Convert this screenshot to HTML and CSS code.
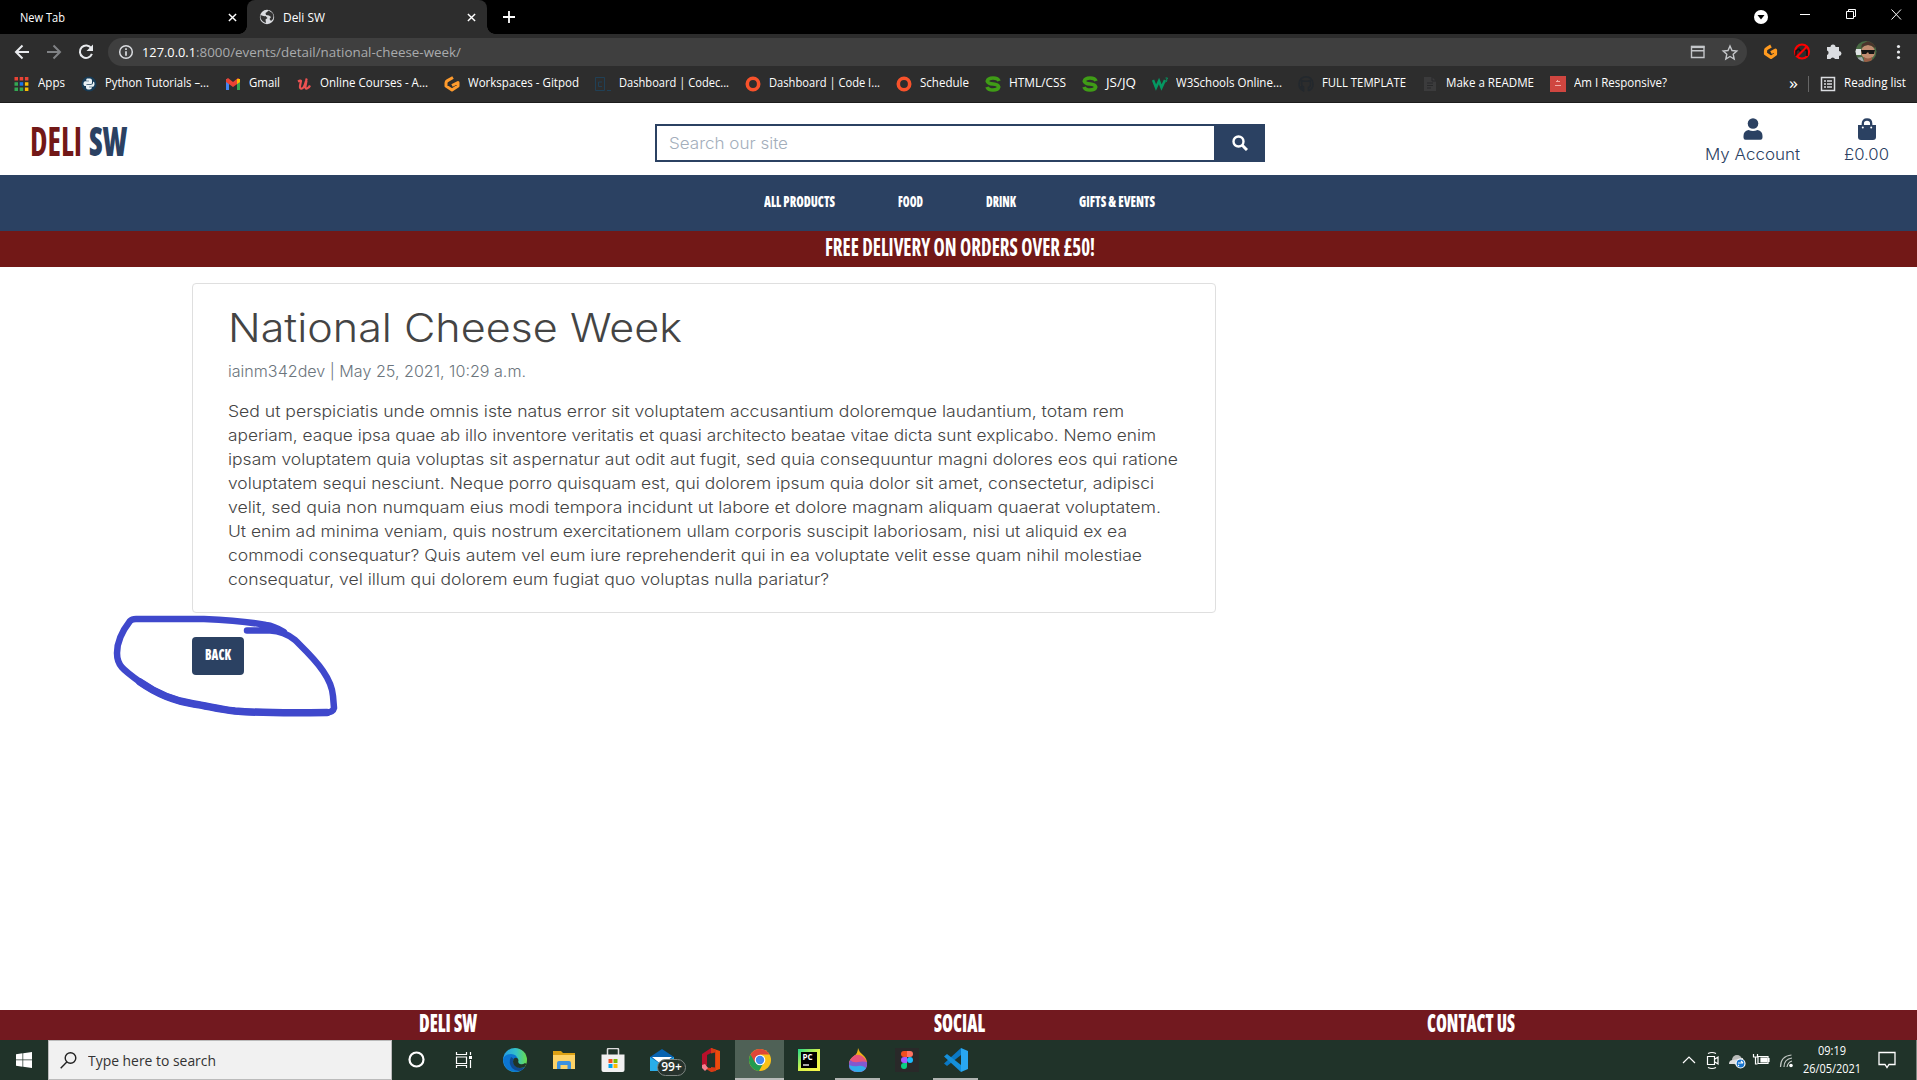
FILE: index.html
```html
<!DOCTYPE html>
<html lang="en">
<head>
<meta charset="utf-8">
<title>Deli SW</title>
<link rel="stylesheet" href="styles.css">
</head>
<body>
<div class="tabs">
  <div class="tab"><span data-w="45">New Tab</span><svg class="x" viewBox="0 0 10 10"><path d="M1 1l8 8M9 1l-8 8"/></svg></div>
  <div class="tab active"><svg class="globe" viewBox="0 0 16 16"><circle cx="8" cy="8" r="7.200" fill="#dadce0"/><path d="M1.500 6q3 1.500 5 1l2 2-2 1.500.5 3.500Q3 13 1.500 9zM9.500 1.500L8 3 6.500 4l.5 2 3 .5 2 1.500-1.500 2 1.500 2 2-2 .5-3-1-3z" fill="#333"/></svg><span data-w="42">Deli SW</span><svg class="x" viewBox="0 0 10 10"><path d="M1 1l8 8M9 1l-8 8"/></svg></div>
  <svg class="plus" viewBox="0 0 12 12"><path d="M6 0v12M0 6h12"/></svg>
  <svg class="wincontrols" viewBox="0 0 167 34"><circle cx="11" cy="17" r="7" fill="#fff"/><path d="M7.500 15h7L11 19.500z" fill="#000"/><g fill="none" stroke="#fff"><path d="M50 14.500h10M96.500 11.500h7v7h-7zM98.500 11V9.500h7v7H104M141.500 9.500l9.500 10M151 9.500l-9.500 10"/></g></svg>
</div>
<div class="toolbar">
  <svg class="navicons" viewBox="0 0 108 38" fill="none" stroke="#e8eaed" stroke-width="2"><path d="M29 19H16M22.500 12.500L16 19l6.500 6.500"/><path d="M47 19h13M53.500 12.500L60 19l-6.500 6.500" stroke="#808285"/><path d="M91.300 15.300a6.200 6.200 0 1 0 .6 5.600"/><path d="M93 11.500V18h-6.500z" fill="#e8eaed" stroke="none"/></svg>
  <div class="omnibox">
    <svg class="info" viewBox="0 0 16 16"><circle cx="8" cy="8" r="6.300" fill="none" stroke="#dadce0" stroke-width="1.500"/><path d="M8 4.300v1.700M8 7.200v4.500" stroke="#dadce0" stroke-width="1.700"/></svg>
    <span class="host" data-w="54">127.0.0.1</span><span class="path" data-w="265">:8000/events/detail/national-cheese-week/</span>
    <svg class="omniicons" viewBox="0 0 50 28" fill="none" stroke="#c4c6c9" stroke-width="1.400"><path d="M1.500 8.500h12.500v11H1.500zM1.500 12.800h12.500"/><path d="M1 9h13.500" stroke-width="2.200"/><path d="M40 8l2 4.500 4.800.5-3.600 3.200 1 4.800L40 18.500 35.800 21l1-4.800L33.200 13l4.800-.5z"/></svg>
  </div>
  <svg class="extensions" viewBox="0 0 170 38"><path d="M24 13l-4 2.300q-1.500.8-1.500 2.400v3l5.500 3.700 4.500-3.200v-4l-4.500 2.400" fill="none" stroke="#ff9a1f" stroke-width="3.200" stroke-linejoin="round"/><circle cx="55" cy="18.500" r="7" fill="none" stroke="#f00" stroke-width="2.200"/><path d="M49 23V18l3-2 2 3 3-3 3 2v5" fill="none" stroke="#111" stroke-width="1.500"/><path d="M50 23.500l10-10" stroke="#f00" stroke-width="2.200"/><path d="M80 14h3.500a2.500 2.500 0 0 1 5 0H92v4a2.500 2.500 0 0 1 0 5v3h-4a2.400 2.400 0 0 0-4.500 0H80v-4a2.400 2.400 0 0 0 0-4.500z" fill="#dadce0"/>
    <clipPath id="av"><circle cx="119" cy="18.500" r="10.500"/></clipPath><g clip-path="url(#av)"><path d="M108 8h22v22h-22z" fill="#486a43"/><path d="M108 16h6v6h-6z" fill="#dfe2e4"/><circle cx="121" cy="19" r="7" fill="#c18c70"/><path d="M114 15q7-6 14 0v-4l-7-3-6 3z" fill="#4a342b"/><path d="M114 17h14l-1 4h-5l-1-2-2 2h-4z" fill="#141414"/><path d="M117 24q4 3 8 0v7h-8z" fill="#985d46"/><path d="M108 25l7-1 3 7h-10z" fill="#a2a6ad"/></g><g fill="#e8eaed"><circle cx="151.500" cy="13.500" r="1.600"/><circle cx="151.500" cy="19" r="1.600"/><circle cx="151.500" cy="24.500" r="1.600"/></g></svg>
</div>
<div class="bookmarks">
  <div class="bm"><svg viewBox="0 0 16 16"><g fill="#ea4335"><path d="M.500 1h3.500v3.500H.500zM5.700 1h3.500v3.500H5.700zM10.900 1h3.500v3.500h-3.500z"/></g><path d="M.500 6.200h3.500v3.500H.500zM.500 11.400h3.500v3.500H.500zM5.700 11.400h3.500v3.500H5.700z" fill="#34a853"/><path d="M5.700 6.200h3.500v3.500H5.700z" fill="#1a73e8"/><path d="M10.900 6.200h3.500v3.500h-3.500zM10.900 11.400h3.500v3.500h-3.500z" fill="#fbbc04"/></svg><span data-w="27">Apps</span></div>
  <div class="bm"><svg viewBox="0 0 16 16"><circle cx="8" cy="8" r="7.500" fill="#173b56"/><path d="M6 2.500h3q2 0 2 2V7q0 1-1 1H6.500q-1.500 0-1.500 2H3.500Q2 9 2.500 7T4.500 5.300H8V4.700H5.200Q5 3 6 2.500zM12 5.500q2 .5 1.500 3T11.500 10.700H8v.6h3q0 2-2 2.200H7q-2-.2-2-2V10q0-1.300 1.300-1.300H10Q12 8.500 12 7z" fill="#e9f1f5"/></svg><span data-w="104">Python Tutorials –...</span></div>
  <div class="bm"><svg viewBox="0 0 16 16"><path d="M1 3h3v11H1z" fill="#4285f4"/><path d="M12 3h3v11h-3z" fill="#34a853"/><path d="M1 3.500L3 2l5 4 5-4 2 1.500V6l-7 5-7-5z" fill="#ea4335"/><path d="M12 3l3 0v3l-3 2z" fill="#fbbc04"/></svg><span data-w="31">Gmail</span></div>
  <div class="bm"><svg viewBox="0 0 16 16"><path d="M2 5.500q3-1.500 3-.5l-1 5q-.5 3 2 2.500Q8 12 10 5q.5-2 .8-2.500M10.500 4.500L9.500 10q-.5 3 1.500 2.500 2-.5 3-3" fill="none" stroke="#ec5252" stroke-width="2.200"/></svg><span data-w="108">Online Courses - A...</span></div>
  <div class="bm"><svg viewBox="0 0 16 16"><path d="M9 1.500L3.500 4.600Q2 5.500 2 7v3l6 4 6-4V6.500L8 9.500" fill="none" stroke="#ff9b2d" stroke-width="3" stroke-linejoin="round"/></svg><span data-w="111">Workspaces - Gitpod</span></div>
  <div class="bm"><svg viewBox="0 0 16 16" fill="none" stroke="#204056"><path d="M.500 1.500h9v13h-9zM7 6H3.500v4.500H7M12 14.500h4"/></svg><span data-w="110">Dashboard | Codec...</span></div>
  <div class="bm"><svg viewBox="0 0 16 16"><circle cx="8" cy="8" r="5.700" fill="none" stroke="#f7522b" stroke-width="3.600"/></svg><span data-w="111">Dashboard | Code I...</span></div>
  <div class="bm"><svg viewBox="0 0 16 16"><circle cx="8" cy="8" r="5.700" fill="none" stroke="#f7522b" stroke-width="3.600"/></svg><span data-w="49">Schedule</span></div>
  <div class="bm"><svg viewBox="0 0 16 16"><path d="M14 5Q13 2 8 2T2.300 5.200Q3 7.600 8 8t5.700 3Q13 14 8 14T2 11" fill="none" stroke="#3f9c16" stroke-width="3.600"/></svg><span data-w="57">HTML/CSS</span></div>
  <div class="bm"><svg viewBox="0 0 16 16"><path d="M14 5Q13 2 8 2T2.300 5.200Q3 7.600 8 8t5.700 3Q13 14 8 14T2 11" fill="none" stroke="#3f9c16" stroke-width="3.600"/></svg><span data-w="30">JS/JQ</span></div>
  <div class="bm"><svg viewBox="0 0 16 16" fill="none" stroke="#059862"><path d="M1 4l3 7.500L7 5l2.500 6.500L13 4" stroke-width="2.500"/><path d="M13.500 2h2l-1 2q1.500 1-1 2"/></svg><span data-w="106">W3Schools Online...</span></div>
  <div class="bm"><svg viewBox="0 0 16 16"><path d="M8 .8a7.300 7.300 0 0 0-2.500 14v-3q-2 .5-3-1.500M10.500 14.800a7.300 7.300 0 0 0-2.500-14M10.500 15v-3.500q2.500-1 2-4.500l-.5-2.500-2 .8H6l-2-.8L3.500 7q0 3.500 2.500 4.500" fill="none" stroke="#23282d" stroke-width="1.600"/></svg><span data-w="84">FULL TEMPLATE</span></div>
  <div class="bm"><svg viewBox="0 0 16 16"><path d="M2 1h8l4 4v10H2z" fill="#3b3b3c"/><path d="M10 1v4h4M5 7h6M5 9.500h6M5 12h4" stroke="#28292a" fill="none"/></svg><span data-w="88">Make a README</span></div>
  <div class="bm"><svg viewBox="0 0 16 16"><path d="M0 0h16v16H0z" fill="#cf4640"/><path d="M5 9.500h6M6 5.500h4M7.500 4v1" stroke="#f0aaa5"/></svg><span data-w="93">Am I Responsive?</span></div>
  <div class="reading"><span class="more" data-w="9">»</span><i></i><svg viewBox="0 0 16 16" fill="none" stroke="#dadce0" stroke-width="1.500"><path d="M1.500 1.500h13v13h-13zM4 5h2M7 5h5M4 8h2M7 8h5M4 11h2M7 11h5"/></svg><span data-w="62">Reading list</span></div>
</div>

<header class="site">
  <a class="logo"><span class="thin" data-w="52">DELI</span><span data-w="38">SW</span></a>
  <div class="search"><div class="field"><span class="mont" data-w="119">Search our site</span></div><div class="go"><svg viewBox="0 0 16 16"><circle cx="6.500" cy="6.500" r="5" fill="none" stroke="#fff" stroke-width="2.400"/><path d="M10 10l5 5" stroke="#fff" stroke-width="3"/></svg></div></div>
  <div class="account">
    <div><svg viewBox="0 0 20 22"><circle cx="10" cy="5.500" r="5.300"/><path d="M5.500 12q4.500 2 9 0 5 1 5 6v1.500q0 2.300-2 2.300h-15q-2 0-2-2.300V18q0-5 5-6z"/></svg><span class="mont" data-w="95">My Account</span></div>
    <div><svg viewBox="0 0 20 22"><path d="M1 7h18v12q0 3-3 3H4q-3 0-3-3z"/><path d="M5.800 9V5.500q0-4 4.200-4t4.200 4V9" fill="none" stroke="#2b4162" stroke-width="2.300"/><circle cx="5.800" cy="9.500" r="1" fill="#fff"/><circle cx="14.200" cy="9.500" r="1" fill="#fff"/></svg><span class="mont" data-w="45">£0.00</span></div>
  </div>
</header>
<nav class="menu"><span data-w="71">ALL PRODUCTS</span><span data-w="25">FOOD</span><span data-w="30">DRINK</span><span data-w="76">GIFTS &amp; EVENTS</span></nav>
<div class="banner"><span data-w="270">FREE DELIVERY ON ORDERS OVER £50!</span></div>
<main>
  <article class="card mont">
    <h1><span data-w="454">National Cheese Week</span></h1>
    <p class="meta"><span data-w="298">iainm342dev | May 25, 2021, 10:29 a.m.</span></p>
    <p><span data-w="896">Sed ut perspiciatis unde omnis iste natus error sit voluptatem accusantium doloremque laudantium, totam rem</span><br>
    <span data-w="928">aperiam, eaque ipsa quae ab illo inventore veritatis et quasi architecto beatae vitae dicta sunt explicabo. Nemo enim</span><br>
    <span data-w="950">ipsam voluptatem quia voluptas sit aspernatur aut odit aut fugit, sed quia consequuntur magni dolores eos qui ratione</span><br>
    <span data-w="926">voluptatem sequi nesciunt. Neque porro quisquam est, qui dolorem ipsum quia dolor sit amet, consectetur, adipisci</span><br>
    <span data-w="933">velit, sed quia non numquam eius modi tempora incidunt ut labore et dolore magnam aliquam quaerat voluptatem.</span><br>
    <span data-w="899">Ut enim ad minima veniam, quis nostrum exercitationem ullam corporis suscipit laboriosam, nisi ut aliquid ex ea</span><br>
    <span data-w="914">commodi consequatur? Quis autem vel eum iure reprehenderit qui in ea voluptate velit esse quam nihil molestiae</span><br>
    <span data-w="601">consequatur, vel illum qui dolorem eum fugiat quo voluptas nulla pariatur?</span></p>
  </article>
  <a class="back"><span data-w="26">BACK</span>
    <svg class="scribble" viewBox="0 0 230 106"><path d="M137 19.500H160Q174 20 185 29C194 38 205 48 213 60Q222 73 223 85L224 97Q223 101 217 101.500C185 102 150 102 125 100C107 98 98 95 84 93C64 90 47 83 30 71C12 58 7 54 7 42C7 29 13 19 20 10Q22 8 26 8H94C118 9 140 11 156 14Q164 15 174 21"/><path d="M30 71C47 83 64 90 84 93C98 95 107 98 125 100C150 102 185 102 217 101.500" stroke-width="7.500"/></svg>
  </a>
</main>
<footer><div><span data-w="58">DELI SW</span></div><div><span data-w="51">SOCIAL</span></div><div><span data-w="88">CONTACT US</span></div></footer>

<div class="taskbar">
  <div class="start"><svg viewBox="0 0 16 16"><path d="M0 2.200L6.500 1.300v6.300H0zM7.200 1.200L16 0v7.600H7.200zM0 8.300h6.500v6.400L0 13.800zM7.200 8.300H16V16l-8.800-1.200z" fill="#fff"/></svg></div>
  <div class="find"><svg viewBox="0 0 17 17" fill="none" stroke="#222" stroke-width="1.400"><circle cx="10.500" cy="6" r="5.300"/><path d="M6.800 10L.700 16.300"/></svg><span data-w="128">Type here to search</span></div>
  <div class="app"><svg viewBox="0 0 24 24"><circle cx="11.500" cy="11.500" r="7" fill="none" stroke="#fff" stroke-width="2.200"/></svg></div>
  <div class="app"><svg viewBox="0 0 24 24" fill="none" stroke="#fff" stroke-width="1.200"><path d="M2.500 4v2.500h10V4M2.500 9h10v6.500h-10zM2.500 20v-2.500h10V20M16.500 4v3M16.500 12v8"/><path d="M15 8h3v3h-3z" fill="#fff" stroke="none"/></svg></div>
  <div class="app"><svg viewBox="0 0 24 24"><defs><linearGradient id="e1" x2="1"><stop stop-color="#249be7"/><stop offset=".55" stop-color="#34c1c8"/><stop offset="1" stop-color="#68de4a"/></linearGradient></defs><circle cx="12" cy="12" r="12" fill="url(#e1)"/><path d="M0 11Q2 6 8 6q6 0 7 6-2-2-5-1-3 2-1 6 3 6 13 2-4 5-10 5Q1 23 0 11z" fill="#0b75d1"/><path d="M8 9q-3 6 1 11 3 3 7 3 4-1 6-4-5 2-9-1-4-3-2-7z" fill="#104a91"/><path d="M11.500 10q3-1 4 2-1 3 1.500 4t5-1l1.500 1-2 3q-7 2.500-10-1.500T11.500 10z" fill="#203329"/></svg></div>
  <div class="app"><svg viewBox="0 0 24 24"><path d="M1 3h8l2 2h12v15H1z" fill="#dca114"/><path d="M1 7h22v14H1z" fill="#fdd367"/><path d="M5 21v-6q0-2 2-2h10q2 0 2 2v6h-3.500v-4H8.500v4z" fill="#3d92df"/></svg></div>
  <div class="app"><svg viewBox="0 0 24 24"><path d="M6.500 7V1.500Q6.500.5 8 .500h8q1.500 0 1.500 1V7" fill="none" stroke="#ddd" stroke-width="1.500"/><path d="M.500 6.500h23V22q0 2-2 2h-19q-2 0-2-2z" fill="#f1f1f1"/><path d="M7.500 11H11.500v4h-4z" fill="#f25022"/><path d="M12.500 11h4v4h-4z" fill="#7fba00"/><path d="M7.500 16h4v4h-4z" fill="#00a4ef"/><path d="M12.500 16h4v4h-4z" fill="#ffb900"/></svg></div>
  <div class="app"><svg viewBox="0 0 24 24"><path d="M0 9l12-8 12 8v14H0z" fill="#0863b0"/><path d="M2 9h20L12 17z" fill="#fff"/><path d="M0 9l12 8 12-8v14H0z" fill="#29aeea"/></svg><b class="badge">99+</b></div>
  <div class="app"><svg viewBox="0 0 24 24"><path d="M3 6l9-6v5l-4 2v10l-4 2-1-2z" fill="#b8102b"/><path d="M12 0l9 3v18l-9 3z" fill="#eb4b0b"/><path d="M12 5v15l-8-1 8 5 5-1V2l-5-2z" fill="#d73a16"/><path d="M12 5.500l4-1v15l-4-.5z" fill="#203329"/><path d="M3 17l3-1 3 4-3 3-3-3z" fill="#f87f91"/></svg></div>
  <div class="app current"><svg viewBox="0 0 24 24"><circle cx="12" cy="12" r="11" fill="#fbc116"/><path d="M12 12L2.500 6.500A11 11 0 0 0 11 23l5-9z" fill="#229b50"/><path d="M2.500 6.500A11 11 0 0 1 21.500 6.500H12l-5 8z" fill="#df4638"/><circle cx="12" cy="12" r="5.300" fill="#fff"/><circle cx="12" cy="12" r="4.200" fill="#4387ee"/></svg></div>
  <div class="app"><svg viewBox="0 0 24 24"><defs><linearGradient id="p" y1="0" x2="1" y2="1"><stop stop-color="#21d789"/><stop offset=".5" stop-color="#d8f34b"/><stop offset="1" stop-color="#fcf84a"/></linearGradient></defs><path d="M1 1h22v22H1z" fill="url(#p)"/><path d="M4 4h16v16H4z"/><text x="5.500" y="12" font-family="Open Sans, sans-serif" font-size="8" font-weight="700" fill="#fff">PC</text><path d="M6 17h6" stroke="#fff" stroke-width="1.300"/></svg></div>
  <div class="app open"><svg viewBox="0 0 24 24"><path d="M12 0q1 4 5 7t4 9q-1 8-9 8T3 16q0-5 5-8 4-3 4-8z" fill="#efb216"/><path d="M9 7q7-1 11 5l1 4q-1 8-9 8T3 16q0-5 6-9z" fill="#e8547b"/><path d="M4 12q3 3 8 2t9 0q1 10-9 10T3 16z" fill="#8259cf"/><path d="M3 17q5 2 9 1t8 2q-2 4-8 4-8 0-9-7z" fill="#32aeea"/></svg></div>
  <div class="app"><svg viewBox="0 0 24 24"><rect width="24" height="24" rx="1" fill="#292929"/><path d="M12 3H9a3 3 0 0 0 0 6h3z" fill="#f24e1e"/><path d="M12 3h3a3 3 0 0 1 0 6h-3z" fill="#ff7262"/><path d="M12 9H9a3 3 0 0 0 0 6h3z" fill="#a259ff"/><circle cx="15" cy="12" r="3" fill="#1abcfe"/><path d="M12 15H9a3 3 0 1 0 3 3z" fill="#0acf83"/></svg></div>
  <div class="app open"><svg viewBox="0 0 24 24"><path d="M17 0l7 3v18l-7 3z" fill="#29a7f1"/><path d="M17 7L3 18 0 15.500 17 0z" fill="#0a78c4"/><path d="M17 17L3 6 0 8.500 17 24z" fill="#1590da"/></svg></div>
  <svg class="tray" viewBox="0 0 120 40" fill="none" stroke="#fff" stroke-width="1.200"><path d="M4 23l6-6 6 6"/><path d="M28.500 16.500h7v8h-7zM36 19l3-2v7l-3-2M29 13.500q4-2 8 0M29 27.500q4 2 8 0"/><circle cx="58" cy="20" r="5" fill="#b9bbb9" stroke="none"/><path d="M50 24q0-4 4-4l10-2v6z" fill="#ddd" stroke="none"/><circle cx="61.500" cy="23.500" r="4.500" fill="#1674ce"/><path d="M59 23h5M62 21l2 2M59 25l1 1"/><path d="M79 16.500h10v7H79zM90 18v4"/><path d="M82 18h6v4h-6z" fill="#fff"/><path d="M74.500 14v3h4v-3M76.500 17v7h2"/><path d="M101.500 27q0-11 11-12M105 27q0-8 8-9M108 27q1-5 5-6" stroke="#c4cac6"/><circle cx="112" cy="25.500" r="1.200" fill="#fff"/></svg>
  <div class="clock"><span data-w="28">09:19</span><span data-w="58">26/05/2021</span></div>
  <svg class="notify" viewBox="0 0 18 18" fill="none" stroke="#fff" stroke-width="1.300"><path d="M1 1.500h16v12h-6L9 16.500l-2-3H1z"/></svg>
</div>
<script src="fit.js"></script>
</body>
</html>
```
FILE: styles.css
```css
* { box-sizing: border-box; }
body { margin: 0; width: 1917px; height: 1080px; overflow: hidden; display: flex; flex-direction: column; background: #fff; font-family: "Open Sans", "Noto Sans", sans-serif; font-size: 12px; color: #fff; }
svg { flex: none; display: block; }
[data-w] { display: inline-block; flex: none; white-space: pre; transform-origin: 0 50%; }
.mont { font-family: Inter, "Open Sans", sans-serif; font-weight: 300; }

.tabs { height: 34px; background: #000; display: flex; align-items: center; }
.tab { height: 34px; width: 247px; padding: 0 10px 0 20px; display: flex; align-items: center; }
.tab .x { width: 9px; height: 9px; margin-left: auto; stroke: #fff; stroke-width: 1.6; }
.tab.active { position: relative; width: 240px; padding: 0 11px 0 12px; background: #2d2d2d; border-radius: 8px 8px 0 0; }
.tab.active::before, .tab.active::after { content: ""; position: absolute; bottom: 0; width: 8px; height: 8px; }
.tab.active::before { left: -8px; background: radial-gradient(circle at 0 0, #000 7.5px, #2d2d2d 8px); }
.tab.active::after { right: -8px; background: radial-gradient(circle at 100% 0, #000 7.5px, #2d2d2d 8px); }
.globe { width: 16px; height: 16px; margin-right: 8px; }
.plus { width: 12px; height: 12px; margin-left: 16px; stroke: #fff; stroke-width: 1.8; }
.wincontrols { width: 167px; height: 34px; margin-left: auto; }

.toolbar { height: 36px; background: #2d2d2d; display: flex; align-items: center; }
.navicons { width: 108px; height: 38px; }
.omnibox { width: 1639px; height: 28px; border-radius: 14px; background: #3f3f3f; display: flex; align-items: center; padding: 0 7px 0 10px; font-size: 13px; }
.info { width: 16px; height: 16px; margin-right: 8px; }
.path { color: #a9abad; }
.omniicons { width: 50px; height: 28px; margin-left: auto; }
.extensions { width: 170px; height: 38px; }

.bookmarks { height: 33px; padding: 0 11px 5px 14px; border-bottom: 1px solid #1c1c1c; background: #2d2d2d; display: flex; align-items: center; gap: 16px; }
.bm { display: flex; align-items: center; gap: 8px; }
.bm span, .reading span { line-height: 16px; padding-bottom: 1px; }
.bookmarks svg { width: 16px; height: 16px; }
.reading { margin-left: auto; display: flex; align-items: center; }
.reading i { width: 1px; height: 16px; background: #666; margin: 0 11px 0 10px; }
.reading svg { margin-right: 8px; }
.reading .more { font-size: 17px; line-height: 14px; }

.site { height: 72px; display: grid; grid-template-columns: 655px 610px 1fr; color: #2b4162; }
.logo { display: flex; gap: 7px; padding: 8px 0 0 30px; font-size: 41px; line-height: 59px; font-weight: 800; font-stretch: 75%; }
.logo .thin { color: #721817; font-weight: 700; }
.search { margin-top: 21px; height: 38px; display: flex; }
.field { width: 559px; border: 2px solid #2b4162; border-right: 0; padding-left: 12px; display: flex; align-items: center; color: #a3aebb; font-size: 15.5px; }
.go { width: 51px; background: #2b4162; display: flex; align-items: center; justify-content: center; }
.go svg { width: 16px; height: 16px; }
.account { display: flex; justify-content: flex-end; gap: 44px; padding: 15px 28px 0 0; font-size: 15.5px; }
.account div { display: flex; flex-direction: column; align-items: center; }
.account div > span { align-self: flex-start; line-height: 29px; }
.account svg { width: 20px; height: 22px; fill: #2b4162; }

.menu { height: 56px; background: #2b4162; display: flex; justify-content: center; gap: 63px; padding: 0 0 4px 2px; align-items: center; font-size: 16px; font-weight: 800; font-stretch: 75%; }
.banner { height: 36px; background: #721817; display: flex; justify-content: center; padding: 0 0 5px 2px; align-items: center; font-size: 24px; line-height: 30px; font-weight: 700; font-stretch: 75%; }

main { flex: 1; padding: 16px 192px 0; display: flex; flex-direction: column; align-items: flex-start; }
.card { width: 1024px; height: 330px; border: 1px solid #dfdfdf; border-radius: 4px; padding: 20px 35px; color: #444; font-size: 15.4px; line-height: 24px; }
.card h1 { margin: 0; font-size: 39px; line-height: 48px; font-weight: 300; }
.card p { margin: 0; }
.card p span { vertical-align: top; }
.card .meta { margin: 8px 0 16px; color: #6c757d; }
.back { position: relative; margin-top: 24px; width: 52px; height: 38px; border-radius: 4px; background: #2b4162; padding: 0 13px; line-height: 35px; font-size: 16px; font-weight: 800; font-stretch: 75%; }
.scribble { position: absolute; left: -82px; top: -26px; width: 230px; height: 106px; fill: none; stroke: #3f48cc; stroke-width: 6.5; stroke-linecap: round; stroke-linejoin: round; }

footer { height: 30px; flex: none; background: #72191f; padding: 0 190px 0 192px; display: grid; grid-template-columns: repeat(3, 1fr); font-size: 24px; line-height: 25px; font-weight: 800; font-stretch: 75%; }
footer div { display: flex; justify-content: center; }

.taskbar { height: 40px; flex: none; background: #203329; border-right: 1px solid #7b857f; display: flex; align-items: center; }
.start { width: 48px; display: flex; justify-content: center; }
.start svg { width: 16px; height: 16px; }
.find { width: 344px; height: 40px; background: #f1f1f1; border: 1px solid #bbb; display: flex; align-items: center; padding-left: 11px; gap: 11px; color: #333; font-size: 15px; }
.find svg { width: 17px; height: 17px; }
.app { position: relative; width: 49px; height: 40px; display: flex; align-items: center; justify-content: center; border-bottom: 2px solid transparent; padding-top: 2px; }
.app > svg { width: 24px; height: 24px; }
.current { background: #4f6156; border-color: #b9bcba; }
.open { border-image: linear-gradient(to right, transparent 4px, #b0b4b1 4px, #b0b4b1 45px, transparent 45px) 2; }
.badge { position: absolute; left: 20px; top: 19px; height: 17px; width: 29px; border: 1px solid #7d8581; border-radius: 9px; background: #27332d; text-align: center; font-size: 12px; line-height: 14px; font-weight: 600; }
.tray { width: 120px; height: 40px; margin-left: auto; }
.clock { width: 58px; margin-left: 4px; display: flex; flex-direction: column; align-items: flex-start; line-height: 18px; }
.clock span:first-child { margin-left: 15px; }
.notify { width: 18px; height: 18px; margin: 0 20px 0 17px; }
```
FILE: fit.js
```js
// Condense or widen each label to its set width.
document.querySelectorAll('[data-w]').forEach(function (el) {
  var natural = el.getBoundingClientRect().width;
  var wanted = Number(el.dataset.w);
  el.style.transform = 'scaleX(' + wanted / natural + ')';
  el.style.marginRight = (wanted - natural) + 'px';
});
```
